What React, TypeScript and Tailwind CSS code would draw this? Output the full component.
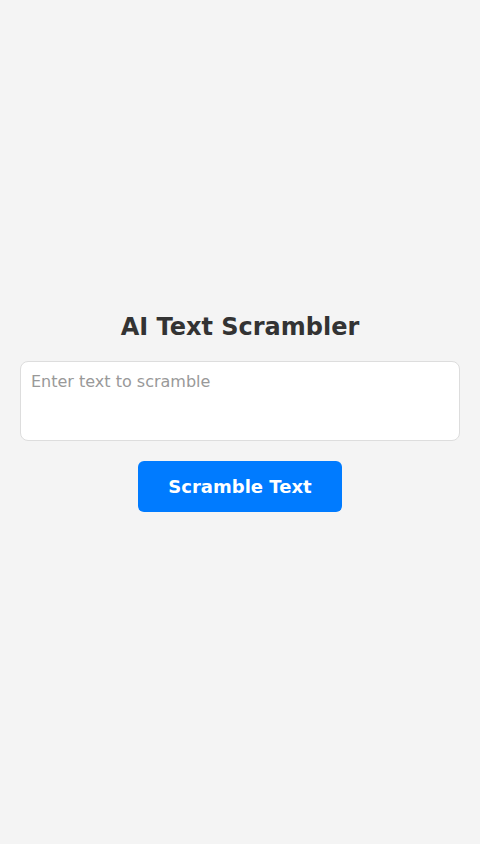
export default function App() {
  return (
    <div className="min-h-screen bg-[#f4f4f4] flex flex-col items-center justify-center px-5 pb-[19px] font-['DejaVu_Sans',sans-serif]">
      <h1 className="text-2xl leading-7 font-bold text-[#333333] mb-5">AI Text Scrambler</h1>
      <textarea
        placeholder="Enter text to scramble"
        className="w-full h-20 p-[10px] text-base leading-[normal] font-['DejaVu_Sans',sans-serif] bg-white border border-[#dddddd] rounded-lg resize-none outline-none text-[#333333] placeholder:text-[#999999]"
      />
      <button className="mt-5 h-[51px] px-[30px] bg-[#007bff] text-white text-lg font-bold rounded-md font-['DejaVu_Sans',sans-serif]">
        Scramble Text
      </button>
    </div>
  );
}
